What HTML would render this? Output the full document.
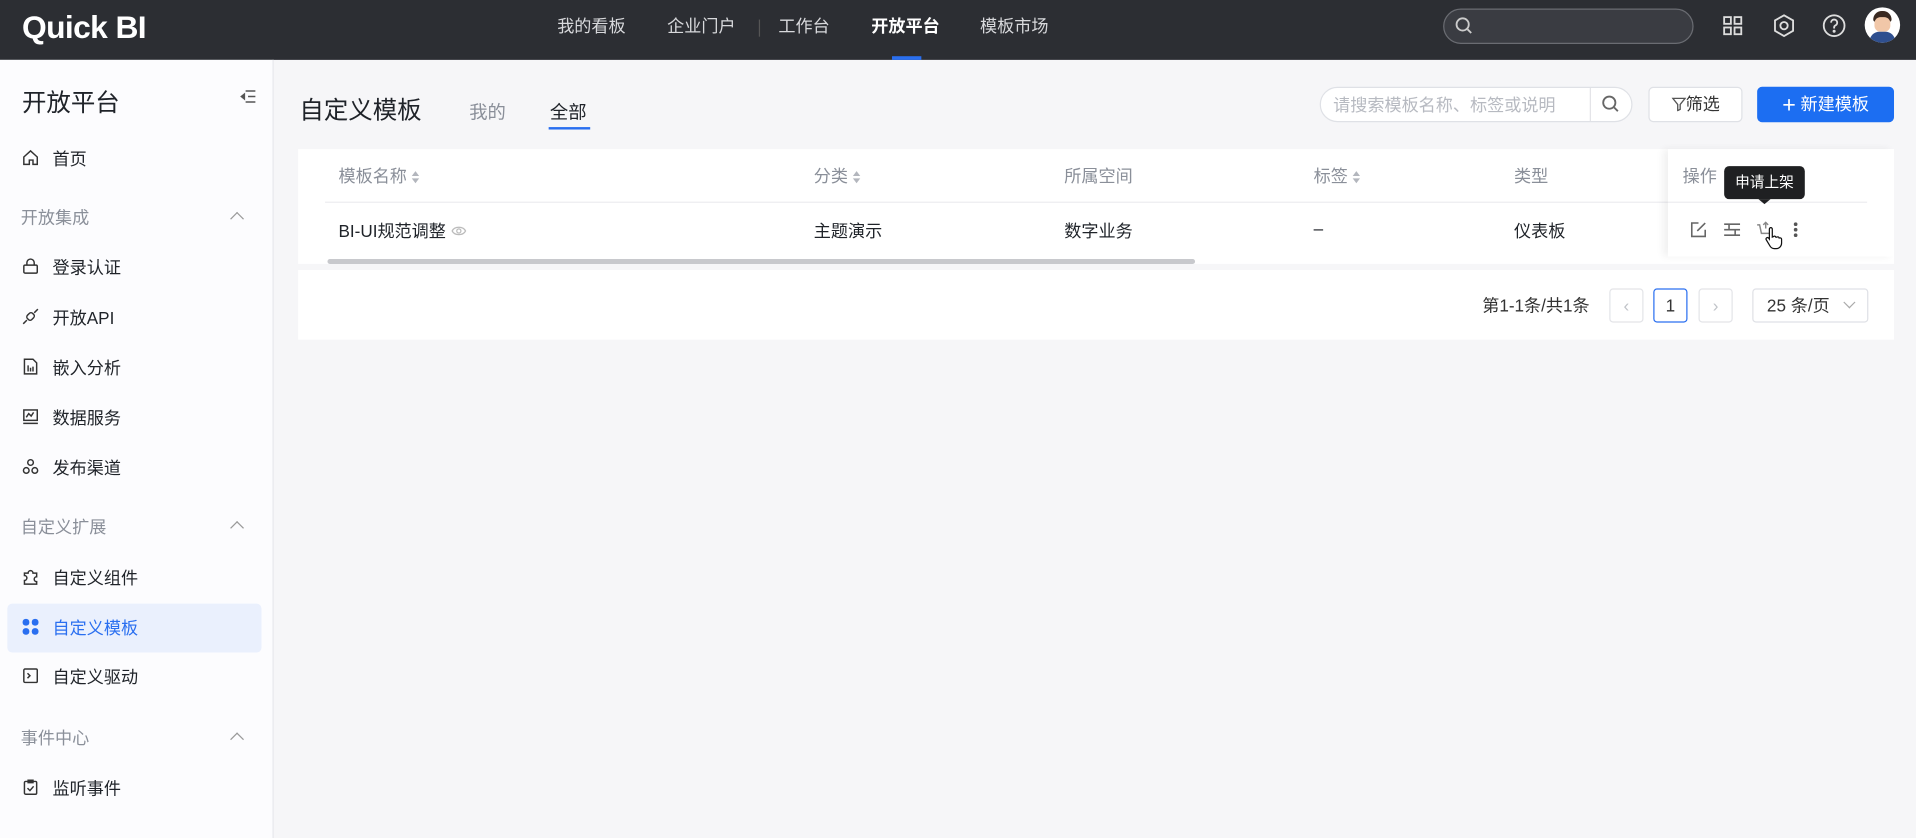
<!DOCTYPE html>
<html><head><meta charset="utf-8">
<style>
*{box-sizing:border-box;margin:0;padding:0}
html,body{width:1916px;height:838px;overflow:hidden;background:#f6f6f8}
body{font-family:"Liberation Sans","Noto Sans CJK SC",sans-serif;color:#1f2329}
#w{position:absolute;left:0;top:0;width:1568px;height:686px;transform:scale(1.22194);transform-origin:0 0;background:#f6f6f8}
.a{position:absolute;white-space:nowrap}
.hd{position:absolute;left:0;top:0;width:1568px;height:49px;background:#2c2e33}
.nav{font-size:14px;color:#d8d9dc;top:11px}
.sb{position:absolute;left:0;top:49px;width:224px;height:637px;background:#fcfcfe;border-right:1px solid #e6e7ec}
.it{font-size:14px;color:#1f2329;left:43px}
.gp{font-size:14px;color:#8a8f99;left:17px}
.ic{position:absolute;left:18px;width:14px;height:14px}
.chev{position:absolute;left:190px;width:8px;height:8px;border-left:1.3px solid #999;border-top:1.3px solid #999;transform:rotate(45deg)}
.card{position:absolute;background:#fff}
.th{font-size:14px;color:#8a8f99;top:134px}
.td{font-size:14px;color:#1f2329;top:179px}
.srt{display:inline-block;vertical-align:middle;margin-left:4px;width:7px;height:10px;position:relative}
.srt:before{content:"";position:absolute;left:0;top:0;border:3.5px solid transparent;border-bottom:4px solid #b3b6bd;border-top:0}
.srt:after{content:"";position:absolute;left:0;top:6px;border:3.5px solid transparent;border-top:4px solid #b3b6bd;border-bottom:0}
.pb{position:absolute;top:236px;width:28px;height:28px;border:1px solid #e3e4e8;border-radius:3px;font-size:14px;text-align:center;line-height:26px;color:#c0c3c8;background:#fff}
</style></head><body><div id="w">
<div class="hd"></div>
<div class="a" style="left:18px;top:7px;font-size:26px;color:#fff;font-weight:bold;letter-spacing:-0.5px">Quick BI</div>
<div class="a nav" style="left:456px">我的看板</div>
<div class="a nav" style="left:546px">企业门户</div>
<div class="a" style="left:621px;top:16px;width:1px;height:14px;background:#555"></div>
<div class="a nav" style="left:637px">工作台</div>
<div class="a nav" style="left:713px;color:#fff;font-weight:bold">开放平台</div>
<div class="a" style="left:730px;top:46px;width:24px;height:3px;background:#2a6ff0"></div>
<div class="a nav" style="left:802px">模板市场</div>
<div class="a" style="left:1181px;top:7px;width:205px;height:29px;border:1px solid #6a6c72;border-radius:15px;background:#3a3c42"></div>
<svg class="a" style="left:1190px;top:13px" width="16" height="16" viewBox="0 0 16 16" fill="none" stroke="#ccc" stroke-width="1.5"><circle cx="7" cy="7" r="5"/><path d="M11 11l3 3"/></svg>
<svg class="a" style="left:1409px;top:12px" width="18" height="18" viewBox="0 0 18 18" fill="none" stroke="#ddd" stroke-width="1.5"><rect x="2" y="2" width="5.5" height="5.5"/><rect x="10.5" y="2" width="5.5" height="5.5"/><rect x="2" y="10.5" width="5.5" height="5.5"/><rect x="10.5" y="10.5" width="5.5" height="5.5"/></svg>
<svg class="a" style="left:1450px;top:11px" width="20" height="20" viewBox="0 0 20 20" fill="none" stroke="#ddd" stroke-width="1.5"><path d="M10 1.5l7.4 4.25v8.5L10 18.5l-7.4-4.25v-8.5z"/><circle cx="10" cy="10" r="3"/></svg>
<svg class="a" style="left:1491px;top:11px" width="20" height="20" viewBox="0 0 20 20" fill="none" stroke="#ddd" stroke-width="1.5"><circle cx="10" cy="10" r="8.5"/><path d="M7.5 7.5a2.5 2.5 0 1 1 3.5 2.3c-.7.3-1 .9-1 1.7v.8"/><circle cx="10" cy="14.6" r=".5" fill="#ddd"/></svg>
<div class="a" style="left:1526px;top:6px;width:29px;height:29px;border-radius:50%;background:#fff;overflow:hidden"><div style="position:absolute;left:7px;top:3px;width:15px;height:9px;background:#3a2a22;border-radius:7px 7px 2px 2px"></div><div style="position:absolute;left:8px;top:8px;width:13px;height:12px;background:#f1c7a8;border-radius:5px"></div><div style="position:absolute;left:4px;top:20px;width:21px;height:10px;background:#2f4f8f;border-radius:8px 8px 0 0"></div></div>

<div class="sb"></div>
<div class="a" style="left:18px;top:68px;font-size:20px;color:#1f2329">开放平台</div>
<svg class="a" style="left:196px;top:73px" width="14" height="12" viewBox="0 0 14 12" fill="none" stroke="#555" stroke-width="1.2"><path d="M5 1.5h8M7 6h6M5 10.5h8"/><path d="M4 4L1.5 6 4 8z" fill="#555"/></svg>
<svg class="ic" style="top:122px" viewBox="0 0 14 14" fill="none" stroke="#333" stroke-width="1.2"><path d="M1.5 6.5L7 1.5l5.5 5V12.5h-3.5v-3.5h-3v3.5H1.5z"/></svg>
<div class="a it" style="top:120px">首页</div>
<div class="a gp" style="top:168px">开放集成</div><div class="chev" style="top:175px"></div>
<svg class="ic" style="top:211px" viewBox="0 0 14 14" fill="none" stroke="#333" stroke-width="1.2"><rect x="1.5" y="6" width="11" height="6.5" rx="1"/><path d="M4 6V4a3 3 0 0 1 6 0v2"/></svg>
<div class="a it" style="top:209px">登录认证</div>
<svg class="ic" style="top:252px" viewBox="0 0 14 14" fill="none" stroke="#333" stroke-width="1.2"><path d="M1 13l3-3M10 4l3-3"/><rect x="4" y="4.5" width="6" height="5" rx="2" transform="rotate(-45 7 7)"/></svg>
<div class="a it" style="top:250px">开放API</div>
<svg class="ic" style="top:293px" viewBox="0 0 14 14" fill="none" stroke="#333" stroke-width="1.2"><path d="M2 1h7l3 3v9H2z"/><path d="M5 6v5M7 8v3M9 7v4"/></svg>
<div class="a it" style="top:291px">嵌入分析</div>
<svg class="ic" style="top:334px" viewBox="0 0 14 14" fill="none" stroke="#333" stroke-width="1.2"><rect x="1.5" y="1.5" width="11" height="8.5"/><path d="M1 12.5h12M3.5 7.5l2-3 2 2 2-3"/></svg>
<div class="a it" style="top:332px">数据服务</div>
<svg class="ic" style="top:375px" viewBox="0 0 14 14" fill="none" stroke="#333" stroke-width="1.2"><circle cx="7" cy="3.5" r="2.3"/><circle cx="3.5" cy="10" r="2.3"/><circle cx="10.5" cy="10" r="2.3"/></svg>
<div class="a it" style="top:373px">发布渠道</div>
<div class="a gp" style="top:421px">自定义扩展</div><div class="chev" style="top:428px"></div>
<svg class="ic" style="top:465px" viewBox="0 0 14 14" fill="none" stroke="#333" stroke-width="1.2"><path d="M2 4h3a2 2 0 1 1 4 0h3v3a2 2 0 1 0 0 4v2H2v-3a2 2 0 1 0 0-4z"/></svg>
<div class="a it" style="top:463px">自定义组件</div>
<div class="a" style="left:6px;top:494px;width:208px;height:40px;background:#eaf0fd;border-radius:4px"></div>
<svg class="ic" style="top:506px" viewBox="0 0 14 14" fill="#2a6ff0"><rect x="0.5" y="0.5" width="5.5" height="5.5" rx="2.5"/><rect x="8" y="0.5" width="5.5" height="5.5" rx="2.5"/><rect x="0.5" y="8" width="5.5" height="5.5" rx="2.5"/><rect x="8" y="8" width="5.5" height="5.5" rx="2.5"/></svg>
<div class="a it" style="top:504px;color:#2a6ff0">自定义模板</div>
<svg class="ic" style="top:546px" viewBox="0 0 14 14" fill="none" stroke="#333" stroke-width="1.2"><rect x="1.5" y="1.5" width="11" height="11" rx="1"/><path d="M4.5 5l2 2-2 2"/></svg>
<div class="a it" style="top:544px">自定义驱动</div>
<div class="a gp" style="top:594px">事件中心</div><div class="chev" style="top:601px"></div>
<svg class="ic" style="top:637px" viewBox="0 0 14 14" fill="none" stroke="#333" stroke-width="1.2"><rect x="2" y="2.5" width="10" height="10.5" rx="1"/><path d="M5 1.5h4v2H5zM4.5 8l2 2 3-3.5"/></svg>
<div class="a it" style="top:635px">监听事件</div>

<div class="a" style="left:245px;top:74px;font-size:20px">自定义模板</div>
<div class="a" style="left:384px;top:81px;font-size:15px;color:#8a8f99">我的</div>
<div class="a" style="left:450px;top:81px;font-size:15px">全部</div>
<div class="a" style="left:449px;top:104px;width:34px;height:2px;background:#2a6ff0"></div>
<div class="a" style="left:1080px;top:71px;width:256px;height:29px;border:1px solid #dfe1e6;border-radius:15px;background:#fff"></div>
<div class="a" style="left:1091px;top:76px;font-size:14px;color:#b7bac1">请搜索模板名称、标签或说明</div>
<div class="a" style="left:1301px;top:72px;width:1px;height:27px;background:#e3e4e8"></div>
<svg class="a" style="left:1310px;top:77px" width="16" height="16" viewBox="0 0 16 16" fill="none" stroke="#666" stroke-width="1.5"><circle cx="7" cy="7" r="5"/><path d="M11 11l3 3"/></svg>
<div class="a" style="left:1349px;top:71px;width:77px;height:29px;border:1px solid #dfe1e6;border-radius:4px;background:#fff;font-size:14px;line-height:27px;text-align:center;color:#333"><svg width="12" height="12" viewBox="0 0 12 12" fill="none" stroke="#555" stroke-width="1.1" style="vertical-align:-1px"><path d="M1 1.5h10L7 6.5v4L5 11.5v-5z"/></svg>筛选</div>
<div class="a" style="left:1438px;top:71px;width:112px;height:29px;border-radius:4px;background:#1c6ef2;color:#fff;font-size:14px;line-height:29px;text-align:center"><span style="font-size:19px;vertical-align:-2px">+</span> 新建模板</div>

<div class="card" style="left:244px;top:122px;width:1306px;height:94px"></div>
<div class="a th" style="left:277px">模板名称<span class="srt"></span></div>
<div class="a th" style="left:666px">分类<span class="srt"></span></div>
<div class="a th" style="left:871px">所属空间</div>
<div class="a th" style="left:1075px">标签<span class="srt"></span></div>
<div class="a th" style="left:1239px">类型</div>
<div class="a" style="left:266px;top:165px;width:1262px;height:1px;background:#ececf0"></div>
<div class="a td" style="left:277px">BI-UI规范调整 <svg width="13" height="10" viewBox="0 0 13 10" fill="none" stroke="#bbb" stroke-width="1"><path d="M1 5c2-4 9-4 11 0c-2 4-9 4-11 0z"/><circle cx="6.5" cy="5" r="1.7"/></svg></div>
<div class="a td" style="left:666px">主题演示</div>
<div class="a td" style="left:871px">数字业务</div>
<div class="a td" style="left:1075px">–</div>
<div class="a td" style="left:1239px">仪表板</div>
<div class="a" style="left:268px;top:212px;width:710px;height:4px;background:#c8c9cd;border-radius:2px"></div>
<div class="a" style="left:1365px;top:122px;width:185px;height:88px;background:#fff;box-shadow:-4px 0 6px rgba(0,0,0,.06)"></div>
<div class="a" style="left:1365px;top:165px;width:163px;height:1px;background:#ececf0"></div>
<div class="a th" style="left:1377px">操作</div>
<svg class="a" style="left:1383px;top:181px" width="14" height="14" viewBox="0 0 14 14" fill="none" stroke="#666" stroke-width="1.3"><path d="M7 1.5H1.5v11h11V7M6 8l6.5-6.5"/></svg>
<svg class="a" style="left:1410px;top:181px" width="15" height="14" viewBox="0 0 15 14" fill="none" stroke="#666" stroke-width="1.3"><path d="M1 2.5h13M1 7h13M1 11.5h13M5 2.5v4M10 7v4.5"/></svg>
<svg class="a" style="left:1437px;top:181px" width="14" height="14" viewBox="0 0 14 14" fill="none" stroke="#888" stroke-width="1.2"><path d="M1 3h2l1.5 7h7l1-5M8 1v5M6 3l2-2 2 2"/></svg>
<svg class="a" style="left:1443px;top:185px" width="16" height="20" viewBox="0 0 16 20"><path d="M5 2.5a1.2 1.2 0 0 1 2.4 0V9l1-.4a1.2 1.2 0 0 1 2 .6l.8-.2a1.2 1.2 0 0 1 1.8.8l.5-.1A1.2 1.2 0 0 1 15 10.8V14c0 2.5-2 4.5-4.5 4.5H9c-1.5 0-2.600-.8-3.4-2L2.3 11a1.2 1.2 0 0 1 2-1.2l.7.9z" fill="#fff" stroke="#111" stroke-width="1"/></svg>
<div class="a" style="left:1468px;top:182px;width:3px;height:3px;border-radius:50%;background:#555;box-shadow:0 4.5px 0 #555,0 9px 0 #555"></div>
<div class="a" style="left:1411px;top:136px;width:66px;height:27px;background:#1f2022;border-radius:4px;color:#fff;font-size:12px;line-height:27px;text-align:center">申请上架</div>
<div class="a" style="left:1439px;top:163px;border:5px solid transparent;border-top:4px solid #1f2022"></div>

<div class="card" style="left:244px;top:221px;width:1306px;height:57px"></div>
<div class="a" style="left:1213px;top:240px;font-size:14px;color:#333">第1-1条/共1条</div>
<div class="pb" style="left:1317px">‹</div>
<div class="pb" style="left:1353px;border-color:#2a6ff0;color:#333">1</div>
<div class="pb" style="left:1390px">›</div>
<div class="a" style="left:1434px;top:236px;width:95px;height:28px;border:1px solid #dfe1e6;border-radius:3px;background:#fff;font-size:14px;line-height:26px;padding-left:11px;color:#333">25 条/页</div>
<div class="a" style="left:1510px;top:244px;width:7px;height:7px;border-right:1.2px solid #aaa;border-bottom:1.2px solid #aaa;transform:rotate(45deg)"></div>
</div></body></html>
